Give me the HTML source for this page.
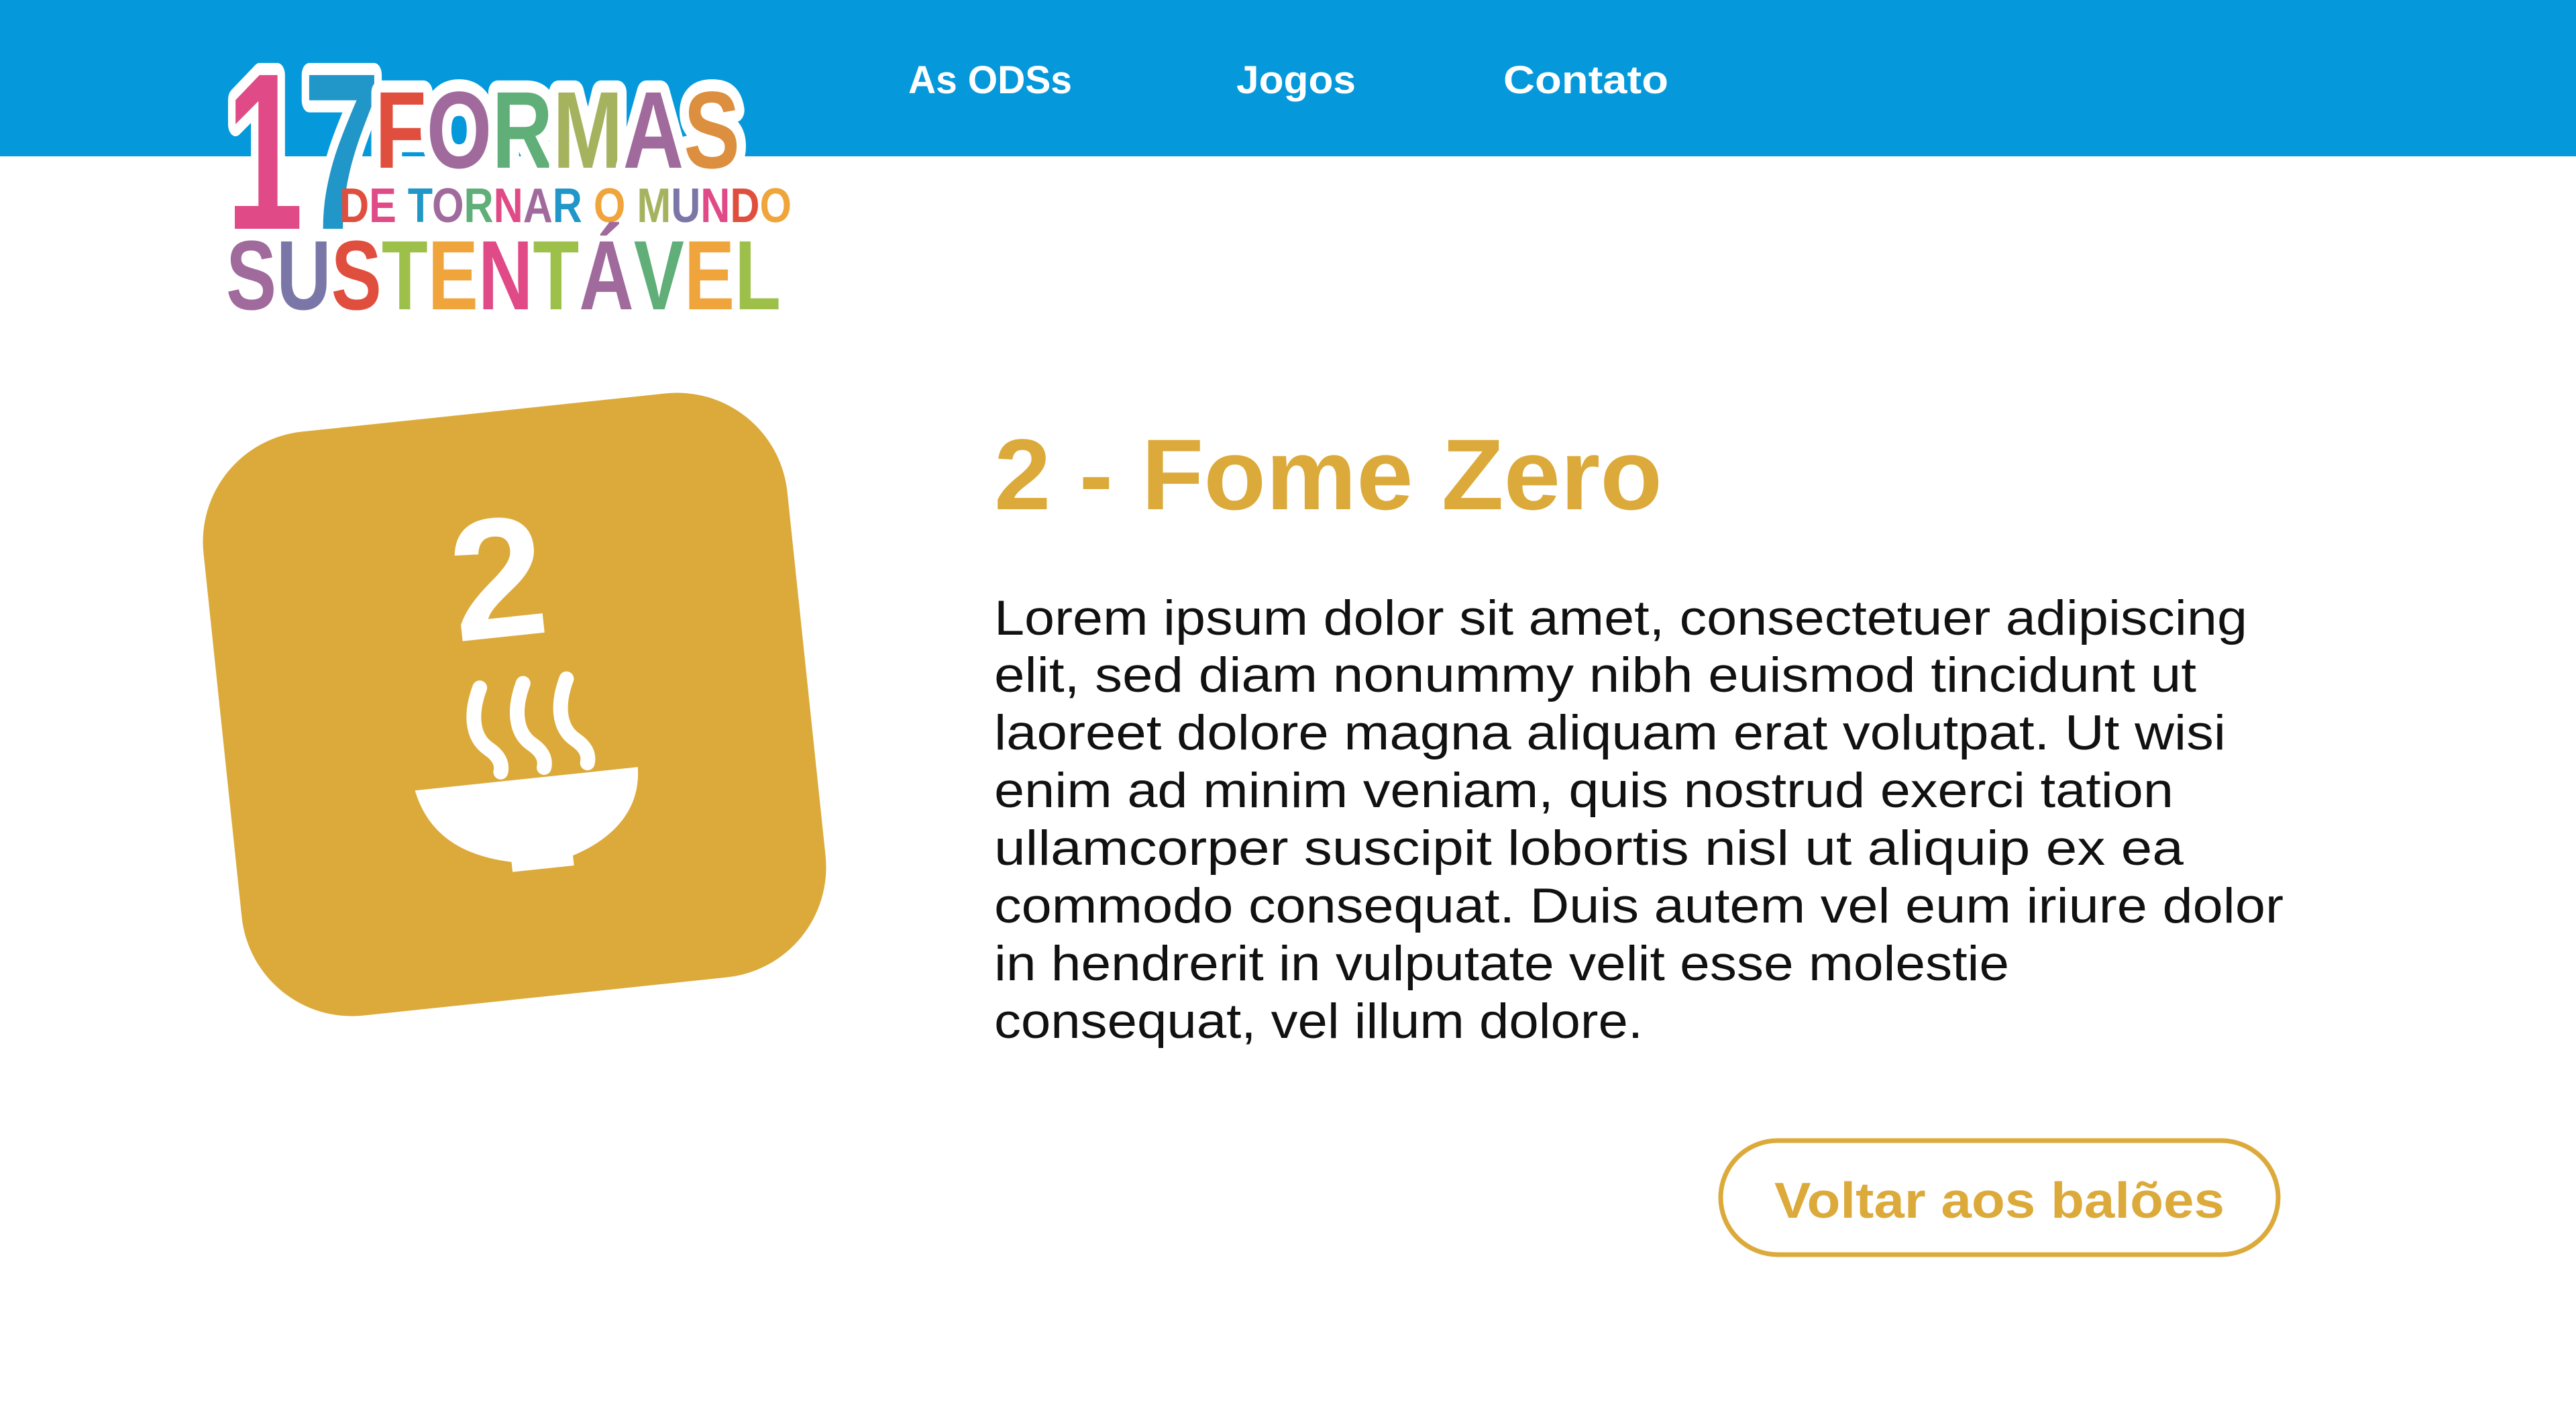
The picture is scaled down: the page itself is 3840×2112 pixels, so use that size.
<!DOCTYPE html>
<html><head><meta charset="utf-8">
<style>
html,body{margin:0;padding:0;background:#fff;}
body{width:3840px;height:2112px;position:relative;overflow:hidden;font-family:"Liberation Sans",sans-serif;}
svg{position:absolute;left:0;top:0;}
</style></head>
<body>
<svg width="3840" height="2112" viewBox="0 0 3840 2112" xmlns="http://www.w3.org/2000/svg">
<rect x="0" y="0" width="3840" height="233" fill="#0599DB"/>
<g font-family="Liberation Sans, sans-serif" font-weight="bold" fill="#fff" font-size="58">
<text x="1354" y="139" textLength="244" lengthAdjust="spacingAndGlyphs">As ODSs</text>
<text x="1843" y="139" textLength="178" lengthAdjust="spacingAndGlyphs">Jogos</text>
<text x="2241" y="139" textLength="246" lengthAdjust="spacingAndGlyphs">Contato</text>
</g>
<!-- logo -->
<g font-family="Liberation Sans, sans-serif" font-weight="bold">
<g stroke="#fff" stroke-width="36" stroke-linejoin="round" paint-order="stroke">
<text x="337" y="341" font-size="333" textLength="230" lengthAdjust="spacingAndGlyphs"><tspan fill="#E04B87">1</tspan><tspan fill="#2196C8">7</tspan></text>
<text x="559" y="250" font-size="163" textLength="544" lengthAdjust="spacingAndGlyphs"><tspan fill="#E04E3E">F</tspan><tspan fill="#A06A9C">O</tspan><tspan fill="#60AE78">R</tspan><tspan fill="#A5B35E">M</tspan><tspan fill="#A06A9C">A</tspan><tspan fill="#DC8F3E">S</tspan></text>
</g>
<text x="506" y="331" font-size="72" textLength="674" lengthAdjust="spacingAndGlyphs"><tspan fill="#E04E3E">D</tspan><tspan fill="#E04B87">E </tspan><tspan fill="#2196C8">T</tspan><tspan fill="#A06A9C">O</tspan><tspan fill="#60AE78">R</tspan><tspan fill="#E04B87">N</tspan><tspan fill="#A06A9C">A</tspan><tspan fill="#2196C8">R </tspan><tspan fill="#F0A53C">O </tspan><tspan fill="#A5B35E">M</tspan><tspan fill="#7A76A8">U</tspan><tspan fill="#E04B87">N</tspan><tspan fill="#E04E3E">D</tspan><tspan fill="#F0A53C">O</tspan></text>
<text x="337" y="461" font-size="147" textLength="827" lengthAdjust="spacingAndGlyphs"><tspan fill="#A06A9C">S</tspan><tspan fill="#7A76A8">U</tspan><tspan fill="#E04E3E">S</tspan><tspan fill="#9DC04A">T</tspan><tspan fill="#F0A53C">E</tspan><tspan fill="#E04B87">N</tspan><tspan fill="#9DC04A">T</tspan><tspan fill="#A06A9C">Á</tspan><tspan fill="#60AE78">V</tspan><tspan fill="#F0A53C">E</tspan><tspan fill="#9DC04A">L</tspan></text>
</g>
<!-- card -->
<g transform="rotate(-6 767 1050)">
<rect x="329.5" y="612.5" width="875" height="875" rx="165" fill="#DCAA3A"/>
<text x="762" y="948" font-family="Liberation Sans, sans-serif" font-weight="bold" font-size="255" fill="#fff" text-anchor="middle">2</text>
<g fill="none" stroke="#fff" stroke-width="22" stroke-linecap="round">
<path d="M718,1020 c-16,32 -22,70 4,92 c14,12 18,24 14,36"/>
<path d="M783,1020 c-16,32 -22,70 4,92 c14,12 18,24 14,36"/>
<path d="M848,1020 c-16,32 -22,70 4,92 c14,12 18,24 14,36"/>
</g>
<path d="M606,1162 L940,1162 C938,1220 900,1262 830,1283 L830,1298 L738,1298 L738,1283 C660,1265 618,1225 606,1162 Z" fill="#fff"/>
</g>
<!-- content -->
<text x="1482" y="759" font-family="Liberation Sans, sans-serif" font-weight="bold" font-size="150" fill="#DCAA3A" textLength="996" lengthAdjust="spacingAndGlyphs">2 - Fome Zero</text>
<g font-family="Liberation Sans, sans-serif" font-size="73" fill="#111">
<text x="1482" y="946" textLength="1868" lengthAdjust="spacingAndGlyphs">Lorem ipsum dolor sit amet, consectetuer adipiscing</text>
<text x="1482" y="1031" textLength="1792" lengthAdjust="spacingAndGlyphs">elit, sed diam nonummy nibh euismod tincidunt ut</text>
<text x="1482" y="1117" textLength="1836" lengthAdjust="spacingAndGlyphs">laoreet dolore magna aliquam erat volutpat. Ut wisi</text>
<text x="1482" y="1203" textLength="1758" lengthAdjust="spacingAndGlyphs">enim ad minim veniam, quis nostrud exerci tation</text>
<text x="1482" y="1289" textLength="1773" lengthAdjust="spacingAndGlyphs">ullamcorper suscipit lobortis nisl ut aliquip ex ea</text>
<text x="1482" y="1375" textLength="1922" lengthAdjust="spacingAndGlyphs">commodo consequat. Duis autem vel eum iriure dolor</text>
<text x="1482" y="1461" textLength="1513" lengthAdjust="spacingAndGlyphs">in hendrerit in vulputate velit esse molestie</text>
<text x="1482" y="1547" textLength="967" lengthAdjust="spacingAndGlyphs">consequat, vel illum dolore.</text>
</g>
<rect x="2565" y="1700" width="831" height="170" rx="85" fill="none" stroke="#DCAA3A" stroke-width="7"/>
<text x="2645" y="1815" font-family="Liberation Sans, sans-serif" font-weight="bold" font-size="75" fill="#DCAA3A" textLength="671" lengthAdjust="spacingAndGlyphs">Voltar aos balões</text>
</svg>
</body></html>
